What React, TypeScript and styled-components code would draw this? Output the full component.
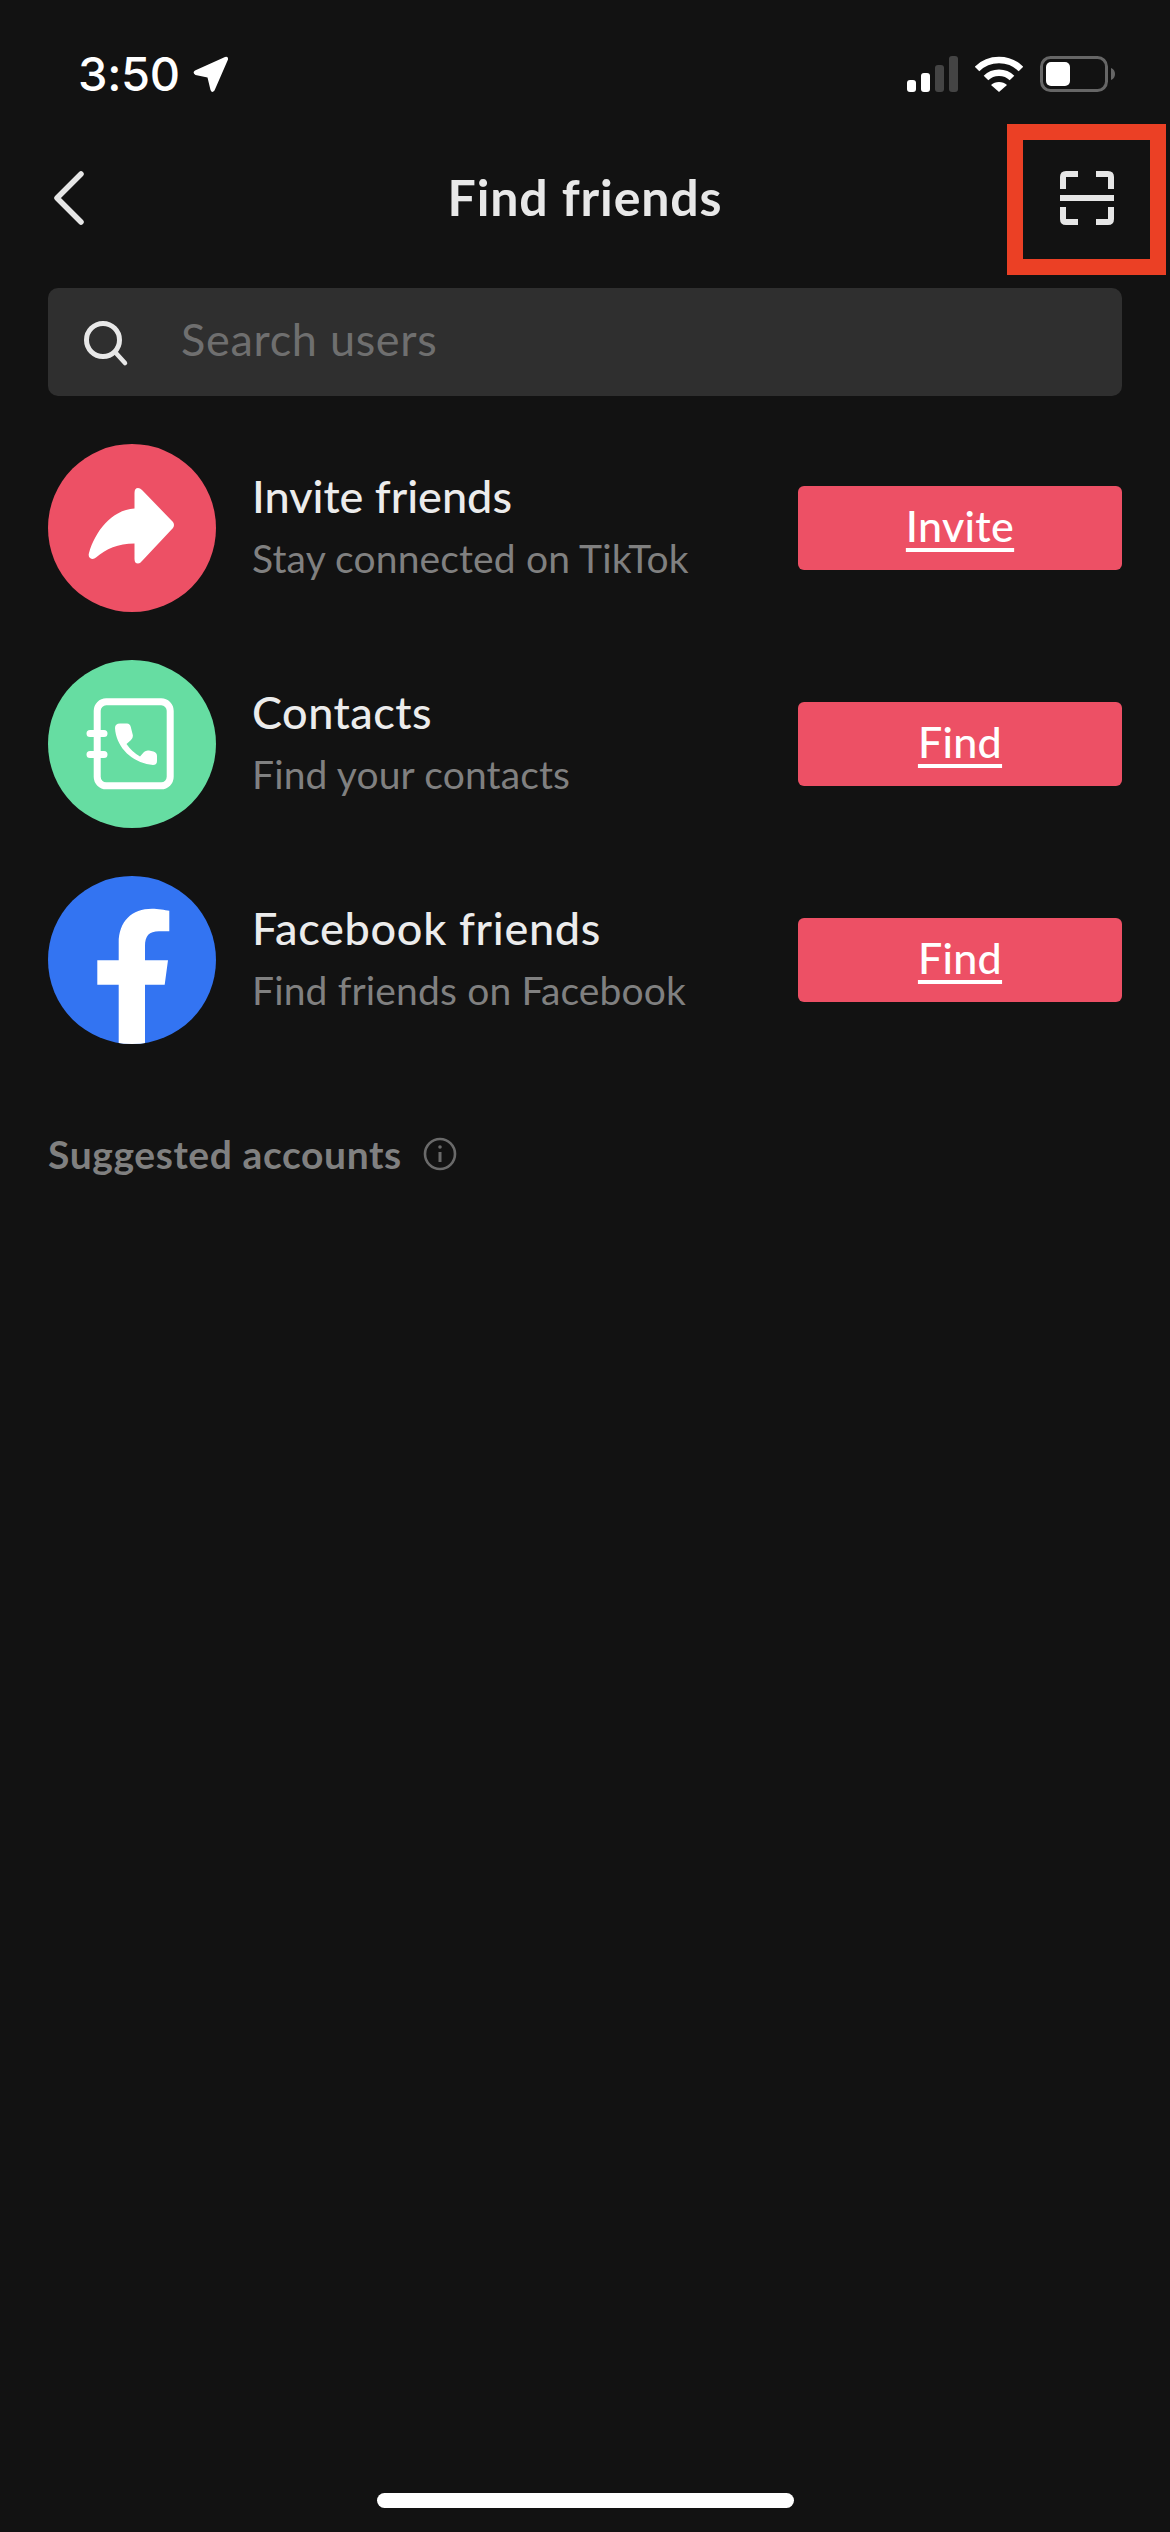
import React from "react";
import styled, { createGlobalStyle } from "styled-components";

const Global = createGlobalStyle`
  html, body { margin: 0; padding: 0; background: #121212; }
  * { box-sizing: border-box; }
`;

const Page = styled.div`
  width: 1170px;
  height: 2532px;
  background: #121212;
  display: flex;
  flex-direction: column;
  font-family: "Lato", "Liberation Sans", sans-serif;
  color: #e8e8e8;
`;

const StatusBar = styled.div`
  height: 124px;
  padding: 52px 55px 0 78px;
  display: flex;
  justify-content: space-between;
  align-items: flex-start;
`;

const TimeGroup = styled.div`
  display: flex;
  align-items: center;
  gap: 13px;
  height: 44px;
`;

const Time = styled.span`
  font-family: "Inter", "Liberation Sans", sans-serif;
  font-size: 47px;
  font-weight: 500;
  line-height: 44px;
  letter-spacing: -0.3px;
  color: #fff;
`;

const StatusIcons = styled.div`
  display: flex;
  align-items: flex-start;
  padding-top: 4px;
`;

const Signal = styled.svg`
  width: 51px;
  height: 36px;
  margin-right: 17px;
`;

const Wifi = styled.svg`
  width: 48px;
  height: 36px;
  margin-right: 17px;
`;

const Battery = styled.svg`
  width: 75px;
  height: 36px;
`;

const Header = styled.div`
  height: 151px;
  padding-right: 4px;
  display: grid;
  grid-template-columns: 1fr auto 1fr;
  align-items: center;
`;

const BackButton = styled.button`
  width: 84px;
  height: 60px;
  padding: 0 0 0 54px;
  margin-bottom: 3px;
  background: none;
  border: 0;
  display: flex;
  align-items: center;
`;

const Title = styled.h1`
  margin: 0 0 6px;
  padding-left: 4px;
  font-size: 50px;
  line-height: 60px;
  font-weight: 700;
  letter-spacing: 0.9px;
  color: #e8e8e8;
`;

const ScanButton = styled.button`
  justify-self: end;
  width: 159px;
  height: 151px;
  background: none;
  border: 16px solid #eb4025;
  padding: 0 0 3px;
  display: flex;
  align-items: center;
  justify-content: center;
`;

const SearchBar = styled.div`
  margin: 13px 48px 0;
  height: 108px;
  border-radius: 10px;
  background: #2f2f2f;
  display: flex;
  align-items: center;
  padding: 0 36px;
  gap: 50px;
`;

const SearchIcon = styled.svg`
  width: 47px;
  height: 47px;
  flex: none;
  margin-top: 4px;
`;

const Placeholder = styled.span`
  font-size: 45px;
  line-height: 50px;
  letter-spacing: 0.7px;
  color: #6f6f6f;
  margin-bottom: 6px;
`;

const List = styled.div`
  margin: 48px 48px 0;
  display: flex;
  flex-direction: column;
  gap: 48px;
`;

const Row = styled.div`
  height: 168px;
  display: flex;
  align-items: center;
`;

const Avatar = styled.div<{ $bg: string }>`
  width: 168px;
  height: 168px;
  border-radius: 50%;
  overflow: hidden;
  flex: none;
  background: ${(p) => p.$bg};
  & > svg { display: block; width: 168px; height: 168px; }
`;

const Info = styled.div`
  margin-left: 36px;
  flex: 1;
  display: flex;
  flex-direction: column;
  gap: 11px;
  margin-bottom: 3px;
`;

const Name = styled.div<{ $tracking: number }>`
  font-size: 45px;
  line-height: 52px;
  font-weight: 500;
  letter-spacing: ${(p) => p.$tracking}px;
  color: #ececec;
`;

const Sub = styled.div`
  font-size: 39px;
  line-height: 50px;
  letter-spacing: 0.15px;
  color: #808080;
`;

const ActionButton = styled.button`
  width: 324px;
  height: 84px;
  flex: none;
  border: 0;
  border-radius: 6px;
  background: #ed5065;
  color: #fff;
  font-family: inherit;
  font-size: 43px;
  line-height: 50px;
  font-weight: 500;
  letter-spacing: 0.3px;
  text-decoration: underline;
  text-decoration-thickness: 4px;
  text-underline-offset: 6px;
  padding: 0 0 5px;
`;

const SectionTitle = styled.div`
  margin: 86px 48px 0;
  display: flex;
  align-items: center;
  gap: 21px;
  font-size: 39px;
  line-height: 48px;
  font-weight: 700;
  letter-spacing: 0.6px;
  color: #808080;
`;

const InfoIcon = styled.svg`
  width: 34px;
  height: 34px;
  flex: none;
`;

const Spacer = styled.div`
  flex: 1;
`;

const HomeBar = styled.div`
  align-self: center;
  width: 417px;
  height: 15px;
  border-radius: 8px;
  background: #fff;
  margin-bottom: 24px;
`;

const rows = [
  { name: "Invite friends", tracking: 0, sub: "Stay connected on TikTok", action: "Invite", bg: "#ed5065", icon: "share" },
  { name: "Contacts", tracking: 0.5, sub: "Find your contacts", action: "Find", bg: "#66dda2", icon: "contacts" },
  { name: "Facebook friends", tracking: 0.7, sub: "Find friends on Facebook", action: "Find", bg: "#3374f2", icon: "facebook" },
];

const AvatarIcon = ({ kind }: { kind: string }) => {
  if (kind === "share") {
    return (
      <svg viewBox="0 0 168 168" fill="#fff">
        <path d="M86.5 49Q86.5 44 90 44Q92 44 94 46L125 78Q127 81 125 84L94 117Q92 119.5 90 119.5Q86.5 119.5 86.5 115V99.5C70 99.5 58 105 48 113.5Q45 116 42 114Q40 112 41 109C47 88 63 66 86.5 64.5Z" />
      </svg>
    );
  }
  if (kind === "contacts") {
    return (
      <svg viewBox="0 0 168 168" fill="none">
        <rect x="49.2" y="41.8" width="73" height="84" rx="9" stroke="#fff" strokeWidth="7" />
        <path d="M42 73.5H56M42 94.5H56" stroke="#fff" strokeWidth="7" strokeLinecap="round" />
        <path
          fill="#fff"
          d="M67 68Q67 63.5 72 63.5H79Q82 63.5 82.8 67L84.8 75Q85.2 78 83 80L78.5 84Q84 92 92 96.5L96 92Q98 90 101 90.5L105.5 91.5Q109 92.5 109 96V101Q109 105 105 105C84 103 68 87 67 68Z"
        />
      </svg>
    );
  }
  return (
    <svg viewBox="0 0 168 168" fill="#fff">
      <path d="M97 168V108.7H116.7L120 84.3H97V70C97 60 101 55.3 111 55.3H121.3V34.7C117 34 110 32.7 104 32.7C84 32.7 70.7 45 70.7 67V84.3H49.3V108.7H70.7V168Z" />
    </svg>
  );
};

export default function App() {
  return (
    <Page>
      <Global />
      <StatusBar>
        <TimeGroup>
          <Time>3:50</Time>
          <svg width="36" height="37" viewBox="0 0 36 37" fill="#fff">
            <path d="M2 14.5L32 1Q35.5 0 35 3.5L21.5 34.5Q19 37.5 17.5 34L14.5 21.5L2.5 19Q-1 16.5 2 14.5Z" />
          </svg>
        </TimeGroup>
        <StatusIcons>
          <Signal viewBox="0 0 51 36">
            <rect x="0" y="24" width="9" height="12" rx="3" fill="#fff" />
            <rect x="14" y="17" width="9" height="19" rx="3" fill="#fff" />
            <rect x="28" y="9" width="9" height="27" rx="3" fill="#444" />
            <rect x="42" y="0" width="9" height="36" rx="3" fill="#444" />
          </Signal>
          <Wifi viewBox="0 0 48 36" fill="none">
            <path d="M2 13C14 1 34 1 46 13" stroke="#fff" strokeWidth="6.5" />
            <path d="M11 22C18 15 30 15 37 22" stroke="#fff" strokeWidth="6.5" />
            <path d="M16 29C20 25 28 25 32 29L24 36Z" fill="#fff" />
          </Wifi>
          <Battery viewBox="0 0 75 36" fill="none">
            <rect x="1.5" y="1.5" width="65" height="33" rx="9" stroke="#666" strokeWidth="3" />
            <rect x="6" y="6" width="24" height="24" rx="5" fill="#fff" />
            <path d="M71 12C74 13 75 15.5 75 18C75 20.5 74 23 71 24Z" fill="#666" />
          </Battery>
        </StatusIcons>
      </StatusBar>

      <Header>
        <BackButton aria-label="Back">
          <svg width="30" height="54" viewBox="0 0 30 54" fill="none">
            <path d="M27 3L3 27L27 51" stroke="#e6e6e6" strokeWidth="5.5" strokeLinecap="round" strokeLinejoin="round" />
          </svg>
        </BackButton>
        <Title>Find friends</Title>
        <ScanButton aria-label="Scan">
          <svg width="54" height="54" viewBox="0 0 54 54" fill="none" stroke="#e6e6e6" strokeWidth="6">
            <path d="M3 18V6Q3 3 6 3H18M36 3H48Q51 3 51 6V18M3 36V48Q3 51 6 51H18M36 51H48Q51 51 51 48V36" />
            <path d="M0 27H54" />
          </svg>
        </ScanButton>
      </Header>

      <SearchBar>
        <SearchIcon viewBox="0 0 47 47" fill="none" stroke="#e8e8e8">
          <circle cx="19" cy="19" r="16.5" strokeWidth="5" />
          <path d="M31 31L41 42" strokeWidth="4.5" strokeLinecap="round" />
        </SearchIcon>
        <Placeholder>Search users</Placeholder>
      </SearchBar>

      <List>
        {rows.map((r) => (
          <Row key={r.name}>
            <Avatar $bg={r.bg}>
              <AvatarIcon kind={r.icon} />
            </Avatar>
            <Info>
              <Name $tracking={r.tracking}>{r.name}</Name>
              <Sub>{r.sub}</Sub>
            </Info>
            <ActionButton>{r.action}</ActionButton>
          </Row>
        ))}
      </List>

      <SectionTitle>
        Suggested accounts
        <InfoIcon viewBox="0 0 34 34" fill="none" stroke="#6a6a6a">
          <circle cx="17" cy="17" r="15" strokeWidth="2.6" />
          <path d="M17 15V25" strokeWidth="3" />
          <circle cx="17" cy="10" r="1.8" fill="#6a6a6a" stroke="none" />
        </InfoIcon>
      </SectionTitle>

      <Spacer />
      <HomeBar />
    </Page>
  );
}
